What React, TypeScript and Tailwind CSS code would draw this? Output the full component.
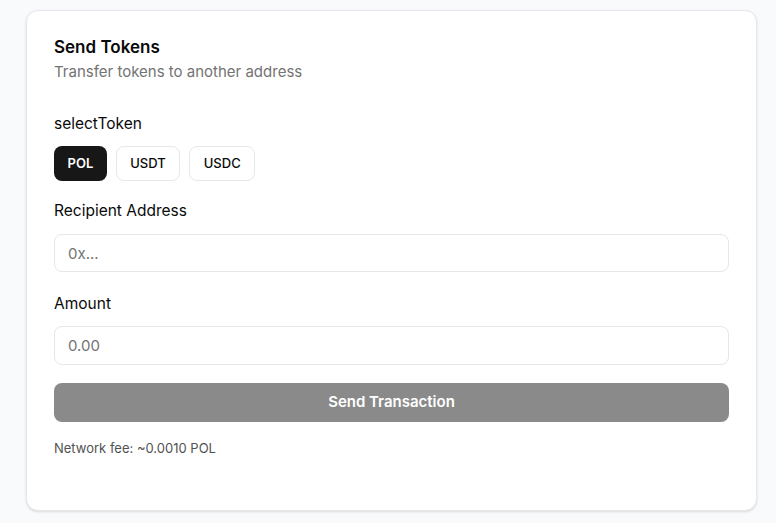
import { useState } from "react";

const tokens = ["POL", "USDT", "USDC"];

export default function App() {
  const [selected, setSelected] = useState("POL");
  const [recipient, setRecipient] = useState("");
  const [amount, setAmount] = useState("");

  return (
    <div
      className="min-h-screen bg-[#f9fafb] px-[26px] pt-[10px] pb-[12px]"
      style={{ fontFamily: "Inter, 'Noto Sans', sans-serif" }}
    >
      <div className="flex h-[501px] w-[731px] flex-col rounded-xl border border-gray-200 bg-white px-[27px] pt-[24px] shadow-sm">
        {/* ヘッダー */}
        <h2 className="text-[17px] leading-6 font-semibold text-[#0a0a0a]">Send Tokens</h2>
        <p className="mt-[3px] text-[15px] leading-5 text-[#737373]">Transfer tokens to another address</p>

        {/* トークン選択 */}
        <label className="mt-[32px] text-[15.5px] leading-5 text-[#0a0a0a]">selectToken</label>
        <div className="mt-[12px] flex gap-[9px]">
          {tokens.map((t) => (
            <button
              key={t}
              type="button"
              onClick={() => setSelected(t)}
              className={`h-[35px] rounded-lg px-[13.5px] text-[13px] ${
                selected === t
                  ? "bg-[#171717] font-semibold text-white"
                  : "border border-gray-200 bg-white font-medium text-[#0a0a0a]"
              }`}
            >
              {t}
            </button>
          ))}
        </div>

        {/* 宛先 */}
        <label className="mt-[20px] text-[15.5px] leading-5 text-[#0a0a0a]">Recipient Address</label>
        <input
          value={recipient}
          onChange={(e) => setRecipient(e.target.value)}
          placeholder="0x..."
          className="mt-[13px] h-[38px] w-full rounded-lg border border-gray-200 px-[13px] text-[15px] text-gray-900 placeholder:text-[#737373] focus:outline-none"
        />

        {/* 金額 */}
        <label className="mt-[22px] text-[15.5px] leading-5 text-[#0a0a0a]">Amount</label>
        <input
          value={amount}
          onChange={(e) => setAmount(e.target.value)}
          placeholder="0.00"
          className="mt-[12px] h-[39px] w-full rounded-lg border border-gray-200 px-[13px] text-[15px] text-gray-900 placeholder:text-[#737373] focus:outline-none"
        />

        <button
          type="button"
          disabled
          className="mt-[18px] h-[39px] w-full rounded-lg bg-[#8a8a8a] text-[15px] font-semibold text-white"
        >
          Send Transaction
        </button>

        <p className="mt-[17px] text-[13px] leading-[18px] text-[#525252]">Network fee: ~0.0010 POL</p>
      </div>
    </div>
  );
}
